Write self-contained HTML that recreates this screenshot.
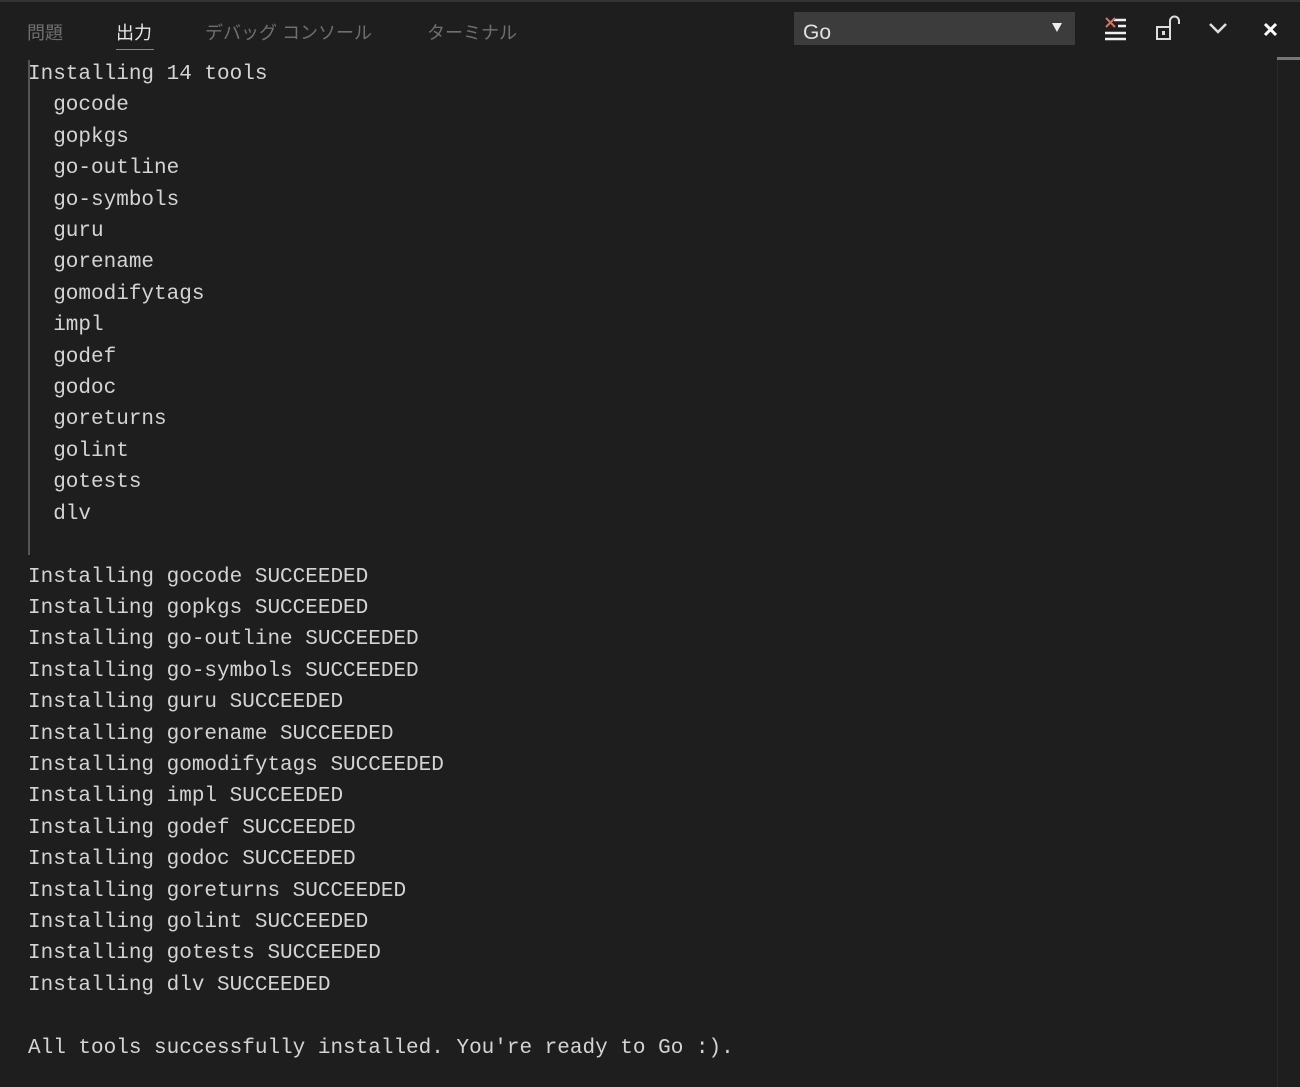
<!DOCTYPE html>
<html><head><meta charset="utf-8"><style>
html,body{margin:0;padding:0;width:1300px;height:1087px;background:#1e1e1e;overflow:hidden;}
.top{position:absolute;left:0;top:0;width:1300px;height:2px;background:#333;}
.tab{position:absolute;top:19px;font:18px "Liberation Sans","Noto Sans CJK JP",sans-serif;color:#6f6f6f;}
.act{color:#e7e7e7;}
.ul{position:absolute;left:116px;top:49px;width:38px;height:1px;background:#888;}
.sel{position:absolute;left:794px;top:12px;width:281px;height:33px;background:#3c3c3c;}
.sel span{position:absolute;left:9px;top:9px;font:21px "Liberation Sans",sans-serif;color:#e0e0e0;}
.arr{position:absolute;left:258px;top:11px;width:0;height:0;border-left:5px solid transparent;border-right:5px solid transparent;border-top:9px solid #eee;}
pre{position:absolute;left:28px;top:59px;margin:0;font:21px/31.4px "Liberation Mono",monospace;color:#d4d4d4;}
.guide{position:absolute;left:28px;top:60px;width:2px;height:495px;background:#555;}
.sb{position:absolute;left:1277px;top:57px;width:23px;height:1030px;border-left:1px solid #2a2a2a;}
.sbt{position:absolute;left:1277px;top:57px;width:23px;height:3px;background:#777;}
</style></head><body>
<div class="top"></div>
<div class="tab" style="left:27px">問題</div>
<div class="tab act" style="left:116px">出力</div>
<div class="ul"></div>
<div class="tab" style="left:205px">デバッグ コンソール</div>
<div class="tab" style="left:427px">ターミナル</div>
<div class="sel"><span>Go</span><div class="arr"></div></div>
<svg style="position:absolute;left:1100px;top:14px" width="190" height="34" viewBox="0 0 190 34">
<g stroke="#f0f0f0" stroke-width="2.5" fill="none">
<line x1="14" y1="6" x2="26" y2="6"/><line x1="18" y1="12" x2="26" y2="12"/><line x1="5" y1="19" x2="26" y2="19"/><line x1="5" y1="25" x2="26" y2="25"/>
</g>
<g stroke="#e06c5a" stroke-width="2"><line x1="6" y1="4" x2="15" y2="13"/><line x1="15" y1="4" x2="6" y2="13"/></g>
<rect x="57" y="13" width="13" height="12" stroke="#ddd" stroke-width="2" fill="none"/>
<rect x="62" y="17" width="3" height="4" fill="#ddd"/>
<path d="M70 13 V7 a4.5 4.5 0 0 1 9 0 V10" stroke="#ddd" stroke-width="2" fill="none"/>
<path d="M110 10 L118 18 L126 10" stroke="#ddd" stroke-width="2.5" fill="none"/>
<g stroke="#fff" stroke-width="3"><line x1="165" y1="10" x2="176" y2="21"/><line x1="176" y1="10" x2="165" y2="21"/></g>
</svg>
<div class="guide"></div>
<div class="sb"></div><div class="sbt"></div>
<pre>Installing 14 tools
  gocode
  gopkgs
  go-outline
  go-symbols
  guru
  gorename
  gomodifytags
  impl
  godef
  godoc
  goreturns
  golint
  gotests
  dlv

Installing gocode SUCCEEDED
Installing gopkgs SUCCEEDED
Installing go-outline SUCCEEDED
Installing go-symbols SUCCEEDED
Installing guru SUCCEEDED
Installing gorename SUCCEEDED
Installing gomodifytags SUCCEEDED
Installing impl SUCCEEDED
Installing godef SUCCEEDED
Installing godoc SUCCEEDED
Installing goreturns SUCCEEDED
Installing golint SUCCEEDED
Installing gotests SUCCEEDED
Installing dlv SUCCEEDED

All tools successfully installed. You're ready to Go :).</pre>
</body></html>
